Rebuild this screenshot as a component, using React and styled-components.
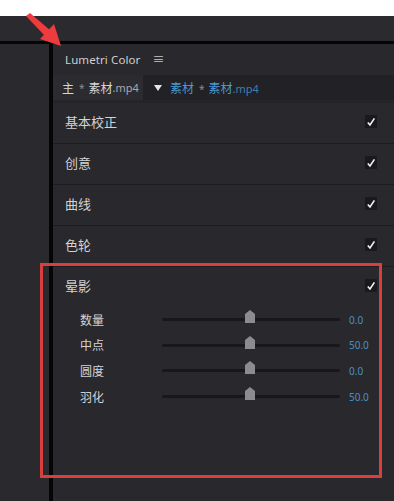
import styled, { createGlobalStyle } from 'styled-components';

const GlobalStyle = createGlobalStyle`
  html, body {
    margin: 0;
    padding: 0;
    background: #fff;
  }
  body {
    font-family: "Noto Sans", "Noto Sans CJK SC", sans-serif;
  }
`;

const Screen = styled.div`
  position: relative;
  width: 394px;
  height: 501px;
  overflow: hidden;
  display: flex;
  flex-direction: column;
  background: #fff;
`;

const WhiteBand = styled.div`
  height: 16px;
  background: #fff;
`;

const TopBar = styled.div`
  height: 25px;
  background: #2b2a2e;
  border-bottom: 3px solid #050505;
`;

const Body = styled.div`
  flex: 1;
  display: flex;
`;

const LeftPanel = styled.div`
  width: 49px;
  background: #2a292d;
  border-right: 4px solid #050505;
`;

const RightPanel = styled.div`
  flex: 1;
  background: #29282c;
  display: flex;
  flex-direction: column;
`;

const PanelHeader = styled.div`
  height: 31px;
  display: flex;
  align-items: center;
  padding-left: 12px;
  gap: 12px;
  color: #cfcfd1;
  font-size: 11.5px;
  letter-spacing: 0.1px;
`;

const Menu = styled.span`
  font-size: 12px;
  color: #c8c8ca;
  margin-top: -1px;
`;

const ClipRow = styled.div`
  height: 25px;
  display: flex;
  align-items: center;
  background: #222125;
  font-size: 12px;
  border-bottom: 3px solid #252428;
`;

const ClipMaster = styled.div`
  width: 81px;
  height: 100%;
  display: flex;
  align-items: center;
  padding-left: 9px;
  background: #2c2b2f;
  color: #d6d6d8;
  white-space: nowrap;
`;

const Star = styled.span`
  margin: 0 4px 0 5px;
  color: #8d8c90;
  font-size: 10px;
`;

const Ext = styled.span`
  color: ${(p) => (p.$blue ? '#3d7fb3' : '#a9a8ac')};
  font-size: 11px;
`;

const Caret = styled.span`
  margin-left: 11px;
  width: 0;
  height: 0;
  border-left: 4px solid transparent;
  border-right: 4px solid transparent;
  border-top: 6px solid #e6e6e8;
`;

const ClipTarget = styled.span`
  margin-left: 8px;
  color: #4a98d4;
  white-space: nowrap;
`;

const Section = styled.div`
  border-bottom: ${(p) => (p.$last ? 'none' : '1px solid #1d1c20')};
  color: #d3d3d5;
`;

const SectionHead = styled.div`
  height: 40px;
  box-sizing: border-box;
  display: flex;
  align-items: center;
  justify-content: space-between;
  padding: 0 17px 3px 12px;
  font-size: 13px;
`;

const Check = styled.span`
  width: 12px;
  height: 13px;
  background: #1a191c;
  display: flex;
  align-items: center;
  justify-content: center;
`;

const SliderList = styled.div`
  display: flex;
  flex-direction: column;
`;

const SliderRow = styled.div`
  height: 25.6px;
  display: flex;
  align-items: center;
  padding-left: 27px;
`;

const SliderLabel = styled.span`
  width: 82px;
  font-size: 12px;
  color: #d3d3d5;
`;

const Track = styled.div`
  position: relative;
  width: 178px;
  height: 3px;
  background: #18171a;
  border-radius: 2px;
`;

const Thumb = styled.svg`
  position: absolute;
  left: 83px;
  top: -8px;
`;

const Value = styled.span`
  margin-left: 9px;
  font-size: 10px;
  color: #4a8fc7;
`;

const Highlight = styled.div`
  position: absolute;
  left: 40px;
  top: 263px;
  width: 336px;
  height: 209px;
  border: 3px solid #d9403d;
  pointer-events: none;
`;

const Arrow = styled.svg`
  position: absolute;
  left: 0;
  top: 0;
  pointer-events: none;
`;

const sections = ['基本校正', '创意', '曲线', '色轮'];

const sliders = [
  { label: '数量', value: '0.0' },
  { label: '中点', value: '50.0' },
  { label: '圆度', value: '0.0' },
  { label: '羽化', value: '50.0' },
];

function CheckMark() {
  return (
    <Check>
      <svg width="10" height="10" viewBox="0 0 10 10">
        <path d="M1.8 5.4 L4 8 L8.4 1.4" fill="none" stroke="#f4f4f4" strokeWidth="1.6" />
      </svg>
    </Check>
  );
}

function Slider({ label, value }) {
  return (
    <SliderRow>
      <SliderLabel>{label}</SliderLabel>
      <Track>
        <Thumb width="10" height="13" viewBox="0 0 10 13">
          <path d="M0 4 L5 0 L10 4 L10 13 L0 13 Z" fill="#8c8b8f" />
        </Thumb>
      </Track>
      <Value>{value}</Value>
    </SliderRow>
  );
}

export default function App() {
  return (
    <>
      <GlobalStyle />
      <Screen>
        <WhiteBand />
        <TopBar />
        <Body>
          <LeftPanel />
          <RightPanel>
            <PanelHeader>
              Lumetri Color
              <Menu>≡</Menu>
            </PanelHeader>
            <ClipRow>
              <ClipMaster>
                主<Star>*</Star>素材<Ext>.mp4</Ext>
              </ClipMaster>
              <Caret />
              <ClipTarget>
                素材<Star>*</Star>素材<Ext $blue>.mp4</Ext>
              </ClipTarget>
            </ClipRow>
            {sections.map((name) => (
              <Section key={name}>
                <SectionHead>
                  {name}
                  <CheckMark />
                </SectionHead>
              </Section>
            ))}
            <Section $last>
              <SectionHead>
                晕影
                <CheckMark />
              </SectionHead>
              <SliderList>
                {sliders.map((s) => (
                  <Slider key={s.label} {...s} />
                ))}
              </SliderList>
            </Section>
          </RightPanel>
        </Body>
        <Highlight />
        <Arrow width="80" height="60" viewBox="0 0 80 60">
          <polygon points="26,16 30,13 51,31 45,36" fill="#ee3b3d" />
          <polygon points="61,46 40,39 54,24" fill="#ee3b3d" />
        </Arrow>
      </Screen>
    </>
  );
}
